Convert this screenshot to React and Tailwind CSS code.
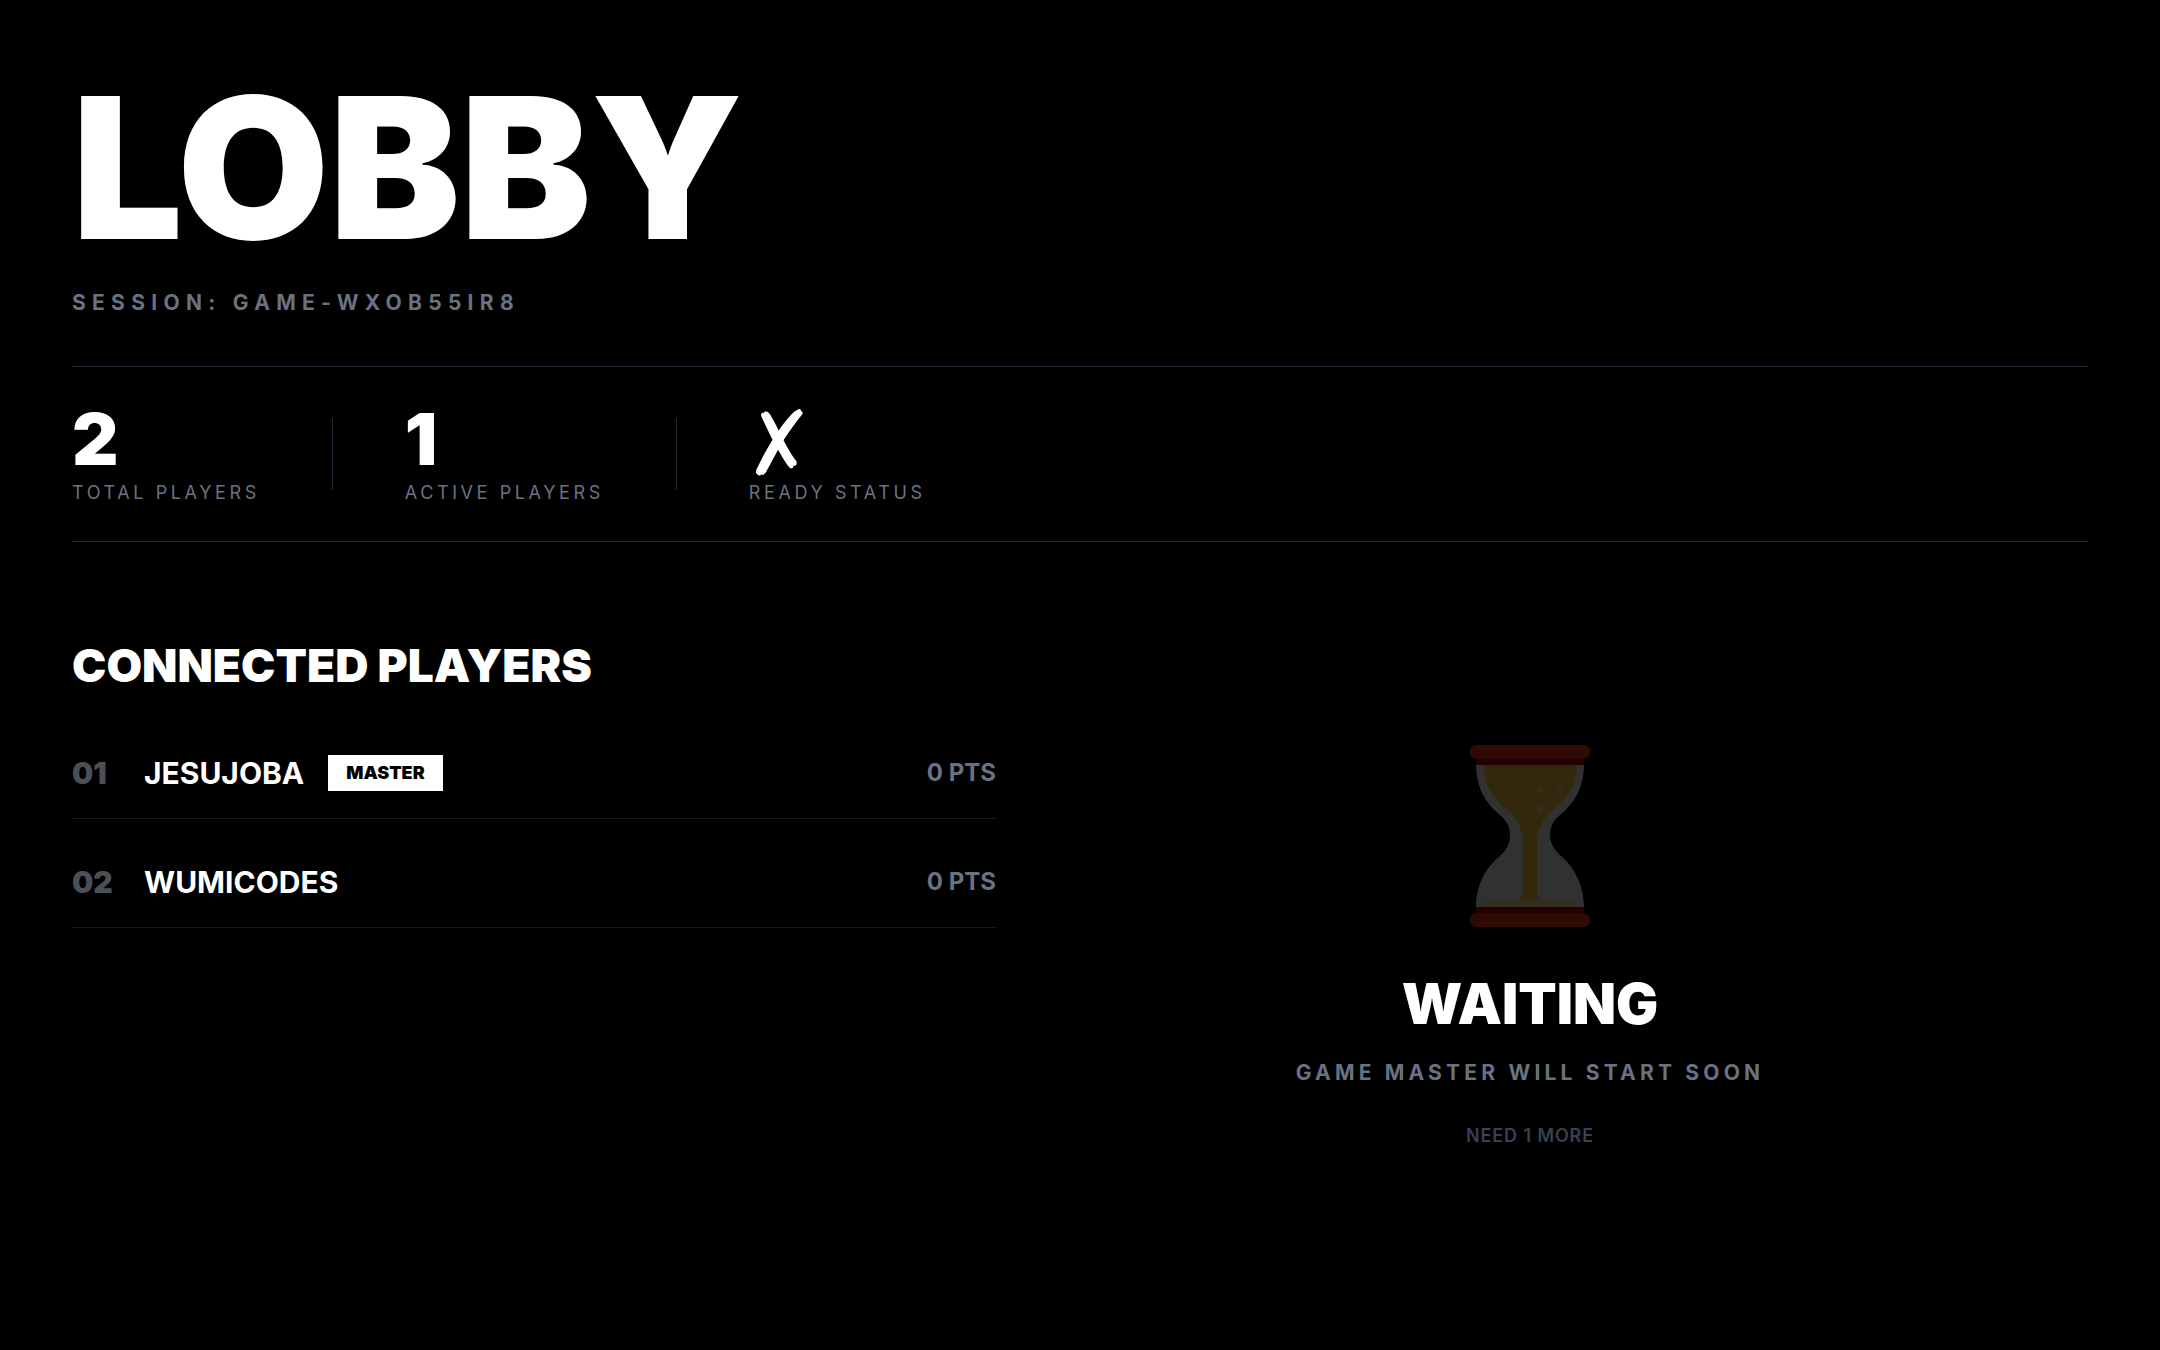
const players = [
    { id: 1, name: 'JESUJOBA', score: 0, isMaster: true },
    { id: 2, name: 'WUMICODES', score: 0, isMaster: false },
];

const CrossMark = () => (
    <svg viewBox="0 0 54 72" className="h-[72px] w-[54px] overflow-visible" fill="#fff" role="img" aria-label="Not ready">
        <g transform="translate(1 0) scale(1 0.965)">
            <path d="M11 11.500 L12.500 10 L14 10 L15 8.600 L18 9.300 L20.500 12.500 C26 22 31 34 36 43.500 C39.500 50 43 56 46.700 61 L46.500 64 L45 65 L43.500 65 L43 67 L40.500 68 L37.500 64.500 C32 56 26 45 21 35 C17.500 27.500 14 20 11.200 13.500 Z" />
            <path d="M46.500 7.500 L49 6.200 L50.500 6.500 L51 8.200 L52.500 9 L52.500 11.500 C46 20 39 29.500 33 39.500 C27 50 22 61 15.500 72.500 L13 74.500 L11 74.200 L10 75.500 L8 74.500 L6 72.500 L6.200 69.500 C11 59 17 47 23.500 36.500 C30 26 37 16 44 9.200 Z" />
        </g>
    </svg>
);

const Hourglass = () => (
    <svg viewBox="0 -1 180 194" className="h-[194px] w-[180px] opacity-20" aria-hidden="true">
        <path d="M36 20 H144 C144 42 134 59 120 70 C113 76 110 82 110 90 C110 98 114 105 121 111 C134 122 144 140 144 162 H36 C36 140 46 122 60 111 C67 105 70 98 70 90 C70 82 67 76 60 70 C46 59 36 42 36 20 Z" fill="#f5f5f5" />
        <path d="M43 20 H137 C136 40 128 52 114 64 C103 73 97 84 97 98 V147 C97 151 99 155 104 155 H76 C81 155 83 151 83 147 V98 C83 84 77 73 66 64 C52 52 44 40 43 20 Z" fill="#ffc83d" />
        <path d="M43 162 C44 157 47 155 51 155 H129 C133 155 136 157 137 162 Z" fill="#ffdf95" />
        <g fill="#ffdf95">
            <circle cx="100" cy="44" r="3.300" />
            <circle cx="120" cy="44" r="3.300" />
            <circle cx="100" cy="64" r="3.300" />
        </g>
        <path d="M36 13 H144 V20 H36 Z M36 162 H144 V169 H36 Z" fill="#b3000f" />
        <rect x="29.500" y="0" width="121" height="13.500" rx="6.750" fill="#f03a17" />
        <rect x="29.500" y="168.500" width="121" height="13.500" rx="6.750" fill="#f03a17" />
    </svg>
);

const Stat = ({ label, children }) => (
    <div className="flex flex-col gap-1.5">
        <div className="h-[72px] text-[72px] leading-none font-black">{children}</div>
        <div className="text-lg leading-6 tracking-[0.2em] text-gray-500">{label}</div>
    </div>
);

const Divider = () => <div className="h-[72px] w-px bg-gray-800" />;

export default function App() {
    return (
        <div className="flex min-h-screen flex-col bg-black px-[72px] pt-[72px] pb-24 font-['Inter',sans-serif] text-white">
            <header className="border-b border-gray-800 pb-12">
                <h1 className="text-[196px] leading-[192px] font-black">LOBBY</h1>
                <p className="mt-6 text-[21px] leading-[30px] font-bold tracking-[0.3em] text-gray-500">
                    SESSION: GAME-WXOB55IR8
                </p>
            </header>

            <section className="flex items-center gap-[72px] border-b border-gray-800 py-9">
                <Stat label="TOTAL PLAYERS">{players.length}</Stat>
                <Divider />
                <Stat label="ACTIVE PLAYERS">1</Stat>
                <Divider />
                <Stat label="READY STATUS"><CrossMark /></Stat>
            </section>

            <main className="mt-24 grid max-w-[1920px] flex-1 grid-cols-2 gap-[72px]">
                <section>
                    <h2 className="mb-9 text-[46px] leading-[54px] font-black">CONNECTED PLAYERS</h2>
                    <ul className="flex flex-col gap-[18px]">
                        {players.map((player, index) => (
                            <li key={player.id} className="flex items-center justify-between border-b border-gray-900 py-6">
                                <div className="flex items-center">
                                    <span className="w-[72px] text-[30px] leading-[42px] font-black text-[#4b5058]">
                                        {String(index + 1).padStart(2, '0')}
                                    </span>
                                    <span className="text-[30px] leading-[42px] font-bold">{player.name}</span>
                                    {player.isMaster && (
                                        <span className="ml-6 bg-white px-[18px] py-1.5 text-lg leading-6 font-black text-black">
                                            MASTER
                                        </span>
                                    )}
                                </div>
                                <span className="text-2xl leading-9 font-bold text-gray-500">{player.score} PTS</span>
                            </li>
                        ))}
                    </ul>
                </section>

                <section className="flex flex-col items-center justify-center text-center">
                    <Hourglass />
                    <h2 className="mt-9 text-[56px] leading-[60px] font-black">WAITING</h2>
                    <p className="mt-6 text-[21px] leading-[30px] font-bold tracking-[0.2em] text-gray-500">
                        GAME MASTER WILL START SOON
                    </p>
                    <p className="mt-9 text-lg leading-6 font-semibold tracking-wider text-gray-700">NEED 1 MORE</p>
                </section>
            </main>
        </div>
    );
}
